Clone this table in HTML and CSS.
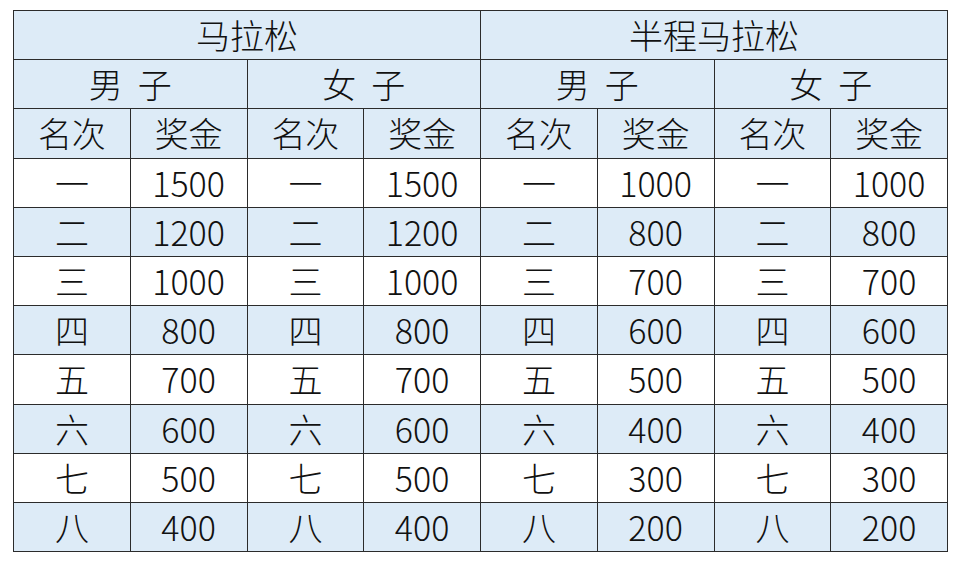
FILE: index.html
```html
<!DOCTYPE html>
<html lang="zh">
<head>
<meta charset="utf-8">
<link rel="stylesheet" href="styles.css">
</head>
<body>
<table class="prize">
  <colgroup>
    <col><col><col><col><col><col><col><col>
  </colgroup>
  <tr class="blue"><td colspan="4">马拉松</td><td colspan="4">半程马拉松</td></tr>
  <tr class="blue"><td colspan="2">男&nbsp;&nbsp;子</td><td colspan="2">女&nbsp;&nbsp;子</td><td colspan="2">男&nbsp;&nbsp;子</td><td colspan="2">女&nbsp;&nbsp;子</td></tr>
  <tr class="blue"><td>名次</td><td>奖金</td><td>名次</td><td>奖金</td><td>名次</td><td>奖金</td><td>名次</td><td>奖金</td></tr>
  <tr><td>一</td><td>1500</td><td>一</td><td>1500</td><td>一</td><td>1000</td><td>一</td><td>1000</td></tr>
  <tr class="blue"><td>二</td><td>1200</td><td>二</td><td>1200</td><td>二</td><td>800</td><td>二</td><td>800</td></tr>
  <tr><td>三</td><td>1000</td><td>三</td><td>1000</td><td>三</td><td>700</td><td>三</td><td>700</td></tr>
  <tr class="blue"><td>四</td><td>800</td><td>四</td><td>800</td><td>四</td><td>600</td><td>四</td><td>600</td></tr>
  <tr><td>五</td><td>700</td><td>五</td><td>700</td><td>五</td><td>500</td><td>五</td><td>500</td></tr>
  <tr class="blue"><td>六</td><td>600</td><td>六</td><td>600</td><td>六</td><td>400</td><td>六</td><td>400</td></tr>
  <tr><td>七</td><td>500</td><td>七</td><td>500</td><td>七</td><td>300</td><td>七</td><td>300</td></tr>
  <tr class="blue"><td>八</td><td>400</td><td>八</td><td>400</td><td>八</td><td>200</td><td>八</td><td>200</td></tr>
</table>
</body>
</html>
```
FILE: styles.css
```css
html, body {
  margin: 0;
  padding: 0;
  background: #ffffff;
}
body {
  padding: 10px 0 0 13px;
  font-family: "Noto Sans CJK SC", "Noto Sans", sans-serif;
}
.prize {
  border-collapse: collapse;
  table-layout: fixed;
  width: 935px;
}
.prize col {
  width: 12.5%;
}
.prize td {
  border: 1px solid #2b2b2b;
  height: 48.2px;
  padding: 0;
  text-align: center;
  vertical-align: middle;
  font-size: 34px;
  font-weight: 300;
  line-height: 48px;
  color: #111111;
  white-space: nowrap;
  overflow: hidden;
}
.prize tr.blue td {
  background: #ddebf7;
}
```
